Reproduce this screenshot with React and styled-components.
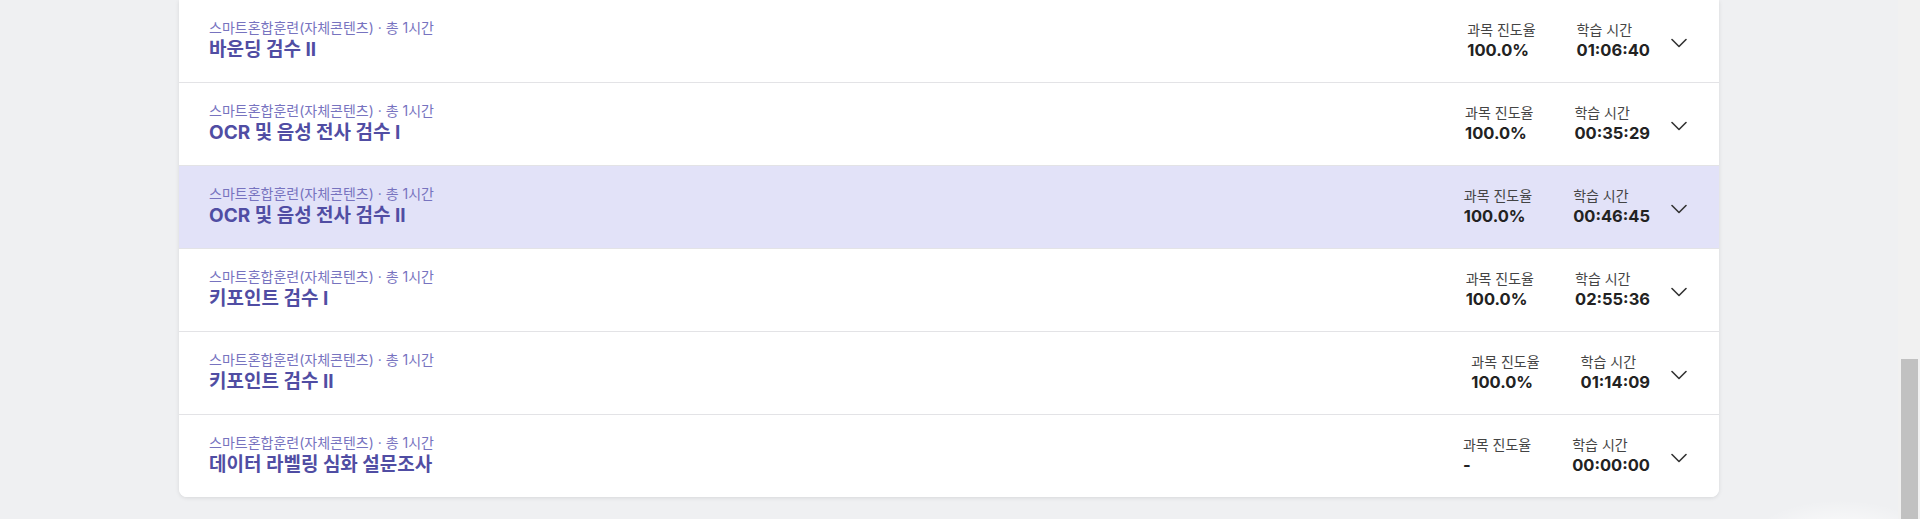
import React from "react";
import styled, { createGlobalStyle } from "styled-components";

const courses = [
  { title: "바운딩 검수 II", progress: "100.0%", time: "01:06:40" },
  { title: "OCR 및 음성 전사 검수 I", progress: "100.0%", time: "00:35:29" },
  { title: "OCR 및 음성 전사 검수 II", progress: "100.0%", time: "00:46:45", active: true },
  { title: "키포인트 검수 I", progress: "100.0%", time: "02:55:36" },
  { title: "키포인트 검수 II", progress: "100.0%", time: "01:14:09" },
  { title: "데이터 라벨링 심화 설문조사", progress: "-", time: "00:00:00" },
];

const Chevron = () => (
  <svg width="16" height="10" viewBox="0 0 16 10" fill="none">
    <polyline
      points="1,1.5 8,8.5 15,1.5"
      stroke="#333"
      strokeWidth="1.6"
      strokeLinecap="round"
      strokeLinejoin="round"
    />
  </svg>
);

const App = () => {
  return (
    <>
      <GlobalStyle />
      <Page>
        <Main>
          <Card>
            {courses.map((course) => (
              <Row key={course.title} $active={course.active}>
                <TitleBox>
                  <Category>스마트혼합훈련(자체콘텐츠) · 총 1시간</Category>
                  <Title>{course.title}</Title>
                </TitleBox>
                <StatsBox>
                  <Stat>
                    <StatLabel>과목 진도율</StatLabel>
                    <StatValue>{course.progress}</StatValue>
                  </Stat>
                  <Stat>
                    <StatLabel>학습 시간</StatLabel>
                    <StatValue>{course.time}</StatValue>
                  </Stat>
                  <ToggleButton>
                    <Chevron />
                  </ToggleButton>
                </StatsBox>
              </Row>
            ))}
          </Card>
        </Main>
        <Scrollbar>
          <Thumb />
        </Scrollbar>
      </Page>
    </>
  );
};

export default App;

const GlobalStyle = createGlobalStyle`
  * { box-sizing: border-box; }
  body {
    margin: 0;
    background: #eff0f2;
    font-family: "Inter", "Noto Sans CJK KR", sans-serif;
    overflow: hidden;
  }
`;

const Page = styled.div`
  height: 519px;
  display: flex;
  background: radial-gradient(ellipse 90px 40px at 1840px 540px, rgba(255, 255, 255, 0.9), rgba(255, 255, 255, 0));
`;

const Main = styled.main`
  flex: 1;
  display: flex;
  justify-content: center;
  align-items: flex-start;
`;

const Card = styled.ul`
  width: 1540px;
  margin: 0;
  padding: 0;
  list-style: none;
  background: #fff;
  border-radius: 0 0 8px 8px;
  box-shadow: 0 1px 4px rgba(0, 0, 0, 0.1);
  overflow: hidden;
`;

const Row = styled.li`
  height: 83px;
  padding: 0 32px 1px 30px;
  display: flex;
  align-items: center;
  justify-content: space-between;
  background: ${(p) => (p.$active ? "#e2e2f8" : "#fff")};
  border-bottom: 1px solid #e3e3e6;
  &:last-child {
    height: 82px;
    border-bottom: none;
  }
`;

const TitleBox = styled.div`
  display: flex;
  flex-direction: column;
  margin-top: -1px;
`;

const Category = styled.p`
  margin: 0;
  font-size: 14px;
  line-height: 19px;
  color: #7773bf;
`;

const Title = styled.h3`
  margin: 0;
  font-size: 19px;
  line-height: 25px;
  font-weight: 700;
  color: #504da3;
`;

const StatsBox = styled.div`
  display: flex;
  align-items: center;
  gap: 41px;
`;

const Stat = styled.div`
  display: flex;
  flex-direction: column;
`;

const StatLabel = styled.span`
  font-size: 14px;
  line-height: 19px;
  color: #444;
`;

const StatValue = styled.strong`
  font-size: 16.5px;
  line-height: 22px;
  font-weight: 700;
  color: #222;
`;

const ToggleButton = styled.button`
  margin: 4px 0 0 -20px;
  width: 16px;
  height: 24px;
  padding: 0;
  border: none;
  background: none;
  display: flex;
  align-items: center;
  justify-content: center;
  cursor: pointer;
`;

const Scrollbar = styled.div`
  width: 22px;
  padding: 359px 2px 0 3px;
  background: #f1f1f1;
`;

const Thumb = styled.div`
  height: 100%;
  background: #c1c1c1;
`;
